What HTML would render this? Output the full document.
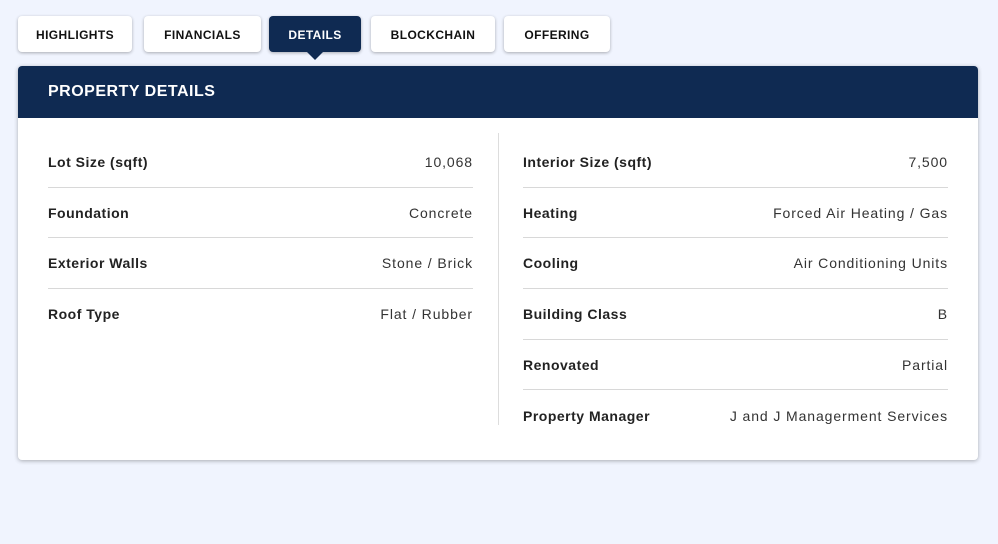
<!DOCTYPE html>
<html><head><style>
body{margin:0;background:#f0f4fe;font-family:"Liberation Sans",sans-serif;width:998px;height:544px;position:relative;overflow:hidden}
.tab{position:absolute;top:16px;height:36px;background:#fff;border-radius:4px;box-shadow:0 1px 3px rgba(0,0,0,.3);font-size:12px;font-weight:bold;color:#111;display:flex;align-items:center;justify-content:center;letter-spacing:.4px;padding-top:1px;box-sizing:border-box}
.tab.act{background:#0f2a52;color:#fff}
.tab.act:after{content:"";position:absolute;bottom:-8px;left:50%;margin-left:-8px;border-left:8px solid transparent;border-right:8px solid transparent;border-top:8px solid #0f2a52}
.card{position:absolute;left:18px;top:66px;width:960px;height:394px;background:#fff;border-radius:4px;box-shadow:0 1px 4px rgba(0,0,0,.3);overflow:hidden}
.hd{height:52px;background:#0f2a52;color:#fff;font-weight:bold;font-size:16px;line-height:52px;padding-left:30px;letter-spacing:.5px}
.col{position:absolute;top:71px;width:425px}
.row{height:50.7px;border-bottom:1px solid #d8d8d8;display:flex;justify-content:space-between;align-items:center;font-size:14px;color:#333;box-sizing:border-box;letter-spacing:.5px}
.row span{letter-spacing:.9px}
.row:last-child{border-bottom:none}
.row b{color:#222}
.vl{position:absolute;left:480px;top:67px;width:1px;height:292px;background:#ddd}
</style></head><body>
<div class="tab" style="left:18px;width:114px">HIGHLIGHTS</div>
<div class="tab" style="left:144px;width:117px">FINANCIALS</div>
<div class="tab act" style="left:269px;width:92px">DETAILS</div>
<div class="tab" style="left:371px;width:124px">BLOCKCHAIN</div>
<div class="tab" style="left:504px;width:106px">OFFERING</div>
<div class="card">
<div class="hd">PROPERTY DETAILS</div>
<div class="vl"></div>
<div class="col" style="left:30px">
<div class="row"><b>Lot Size (sqft)</b><span>10,068</span></div>
<div class="row"><b>Foundation</b><span>Concrete</span></div>
<div class="row"><b>Exterior Walls</b><span>Stone / Brick</span></div>
<div class="row" style="border-bottom:none"><b>Roof Type</b><span>Flat / Rubber</span></div>
</div>
<div class="col" style="left:505px">
<div class="row"><b>Interior Size (sqft)</b><span>7,500</span></div>
<div class="row"><b>Heating</b><span>Forced Air Heating / Gas</span></div>
<div class="row"><b>Cooling</b><span>Air Conditioning Units</span></div>
<div class="row"><b>Building Class</b><span>B</span></div>
<div class="row"><b>Renovated</b><span>Partial</span></div>
<div class="row"><b>Property Manager</b><span>J and J Managerment Services</span></div>
</div>
</div>
</body></html>
